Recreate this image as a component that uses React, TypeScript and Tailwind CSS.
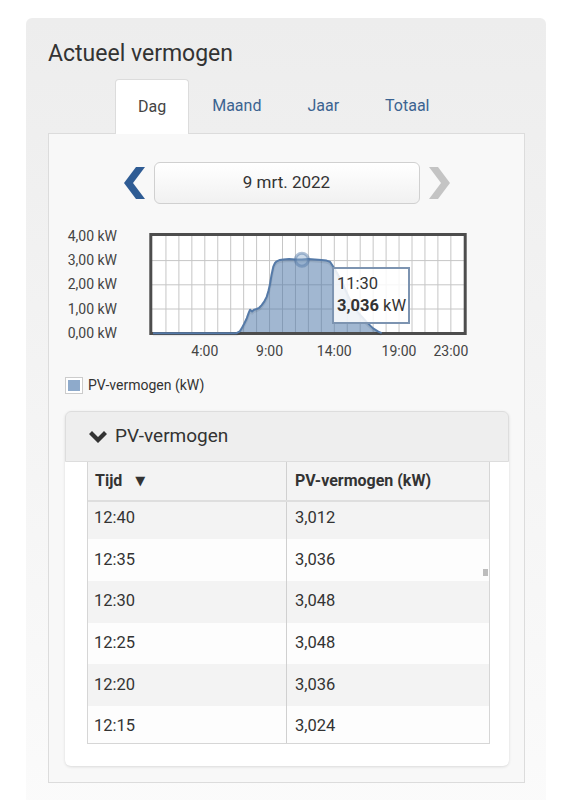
import React from 'react';

const H0 = 93;
const HW = 12.95;
const Y0 = 108.2;
const KW = 24.2;
const px = (h: number) => H0 + h * HW;
const py = (k: number) => Y0 - k * KW;

const series: [number, number][] = [
  [0, 0], [6.45, 0], [6.7, 0.08], [6.85, 0.2], [7.05, 0.4], [7.24, 0.62], [7.4, 0.85],
  [7.5, 0.97], [7.65, 0.9], [7.8, 0.97], [8.0, 1.0], [8.2, 1.05], [8.39, 1.16], [8.6, 1.32],
  [8.78, 1.5], [8.92, 1.75], [9.03, 2.0], [9.15, 2.4], [9.29, 2.75], [9.42, 2.9], [9.55, 2.97],
  [9.8, 3.03], [10.06, 3.05], [10.5, 3.07], [11, 3.05], [11.5, 3.04], [12, 3.06], [12.5, 3.05],
  [13, 3.03], [13.4, 3.0], [13.67, 2.95], [13.92, 2.75], [14.3, 2.4], [14.7, 1.98], [15.2, 1.4],
  [15.8, 0.88], [16.5, 0.46], [17.0, 0.2], [17.4, 0.06], [17.66, 0],
];

const linePath = series.map(([h, k], i) => `${i === 0 ? 'M' : 'L'}${px(h).toFixed(1)},${py(k).toFixed(1)}`).join(' ');
const areaPath = `${linePath} L${px(17.66).toFixed(1)},${Y0} L${px(0)},${Y0} Z`;

const rows = [
  ['12:40', '3,012'],
  ['12:35', '3,036'],
  ['12:30', '3,048'],
  ['12:25', '3,048'],
  ['12:20', '3,036'],
  ['12:15', '3,024'],
];

const Chart = () => (
  <div className="relative mt-[21px] ml-[11px] w-[420px] h-[140px]">
    <svg width="420" height="140" viewBox="0 0 420 140" className="block">
      <rect x="91" y="10" width="314" height="98" fill="#ffffff" />
      {Array.from({ length: 23 }, (_, i) => (
        <line key={i} x1={px(i + 1)} x2={px(i + 1)} y1="10" y2="108" stroke="#c6c6c6" strokeWidth="1" />
      ))}
      {[1, 2, 3].map((k) => (
        <line key={k} x1="91" x2="405" y1={py(k)} y2={py(k)} stroke="#c6c6c6" strokeWidth="1" />
      ))}
      <path d={areaPath} fill="#4a74a6" fillOpacity="0.52" />
      <rect x="90.8" y="9.5" width="314.4" height="99" fill="none" stroke="#4d4d4d" strokeWidth="3" />
      <path d={linePath} fill="none" stroke="#000" strokeOpacity="0.07" strokeWidth="3" transform="translate(0,1.5)" />
      <path d={linePath} fill="none" stroke="#557aa8" strokeWidth="2" strokeLinejoin="round" />
      <circle cx={px(11.5)} cy={py(3.036)} r="6.5" fill="#8caacd" fillOpacity="0.45" stroke="#4f76a5" strokeOpacity="0.45" strokeWidth="3" />
      <g fill="#444" fontSize="14" fontFamily="Roboto, sans-serif">
        {['4,00 kW', '3,00 kW', '2,00 kW', '1,00 kW', '0,00 kW'].map((t, i) => (
          <text key={t} x="57" y={py(4 - i) + 4.5} textAnchor="end">{t}</text>
        ))}
        {[[4, '4:00'], [9, '9:00'], [14, '14:00'], [19, '19:00'], [23, '23:00']].map(([h, t]) => (
          <text key={t as string} x={px(h as number)} y="130.5" textAnchor="middle">{t}</text>
        ))}
      </g>
    </svg>
    <div className="absolute left-[272px] top-[42px] w-[78px] h-[57px] border-2 border-[#7d94b1] bg-white/85 pl-[3px] pt-[4px] text-[16.5px] leading-[22px] text-[#333]">
      <div>11:30</div>
      <div><span className="font-bold">3,036</span> kW</div>
    </div>
  </div>
);

export default function App() {
  return (
    <div className="min-h-[800px] bg-white pt-[18px] pl-[26px] font-['Roboto','Liberation_Sans',sans-serif] overflow-hidden">
      <div className="w-[520px] h-[800px] rounded-t-[6px] bg-linear-to-b from-[#ededed] to-[#fbfbfb] pt-[22px] pl-[22px] pr-[21px]">
        <h1 className="text-[23px] leading-[28px] text-[#333]">Actueel vermogen</h1>

        <div className="mt-[11px] ml-[67px] flex text-[16px]">
          <div className="relative z-10 -mb-px h-[55px] px-[22px] flex items-center bg-white border border-b-0 border-[#dcdcdc] rounded-t-[4px] text-[#444]">Dag</div>
          <div className="h-[54px] px-[23px] flex items-center text-[#3b6391]">Maand</div>
          <div className="h-[54px] px-[23px] flex items-center text-[#3b6391]">Jaar</div>
          <div className="h-[54px] px-[23px] flex items-center text-[#3b6391]">Totaal</div>
        </div>

        <div className="h-[650px] border border-[#dcdcdc] bg-[#f8f8f8] pt-[28px]">
          <div className="flex items-center justify-center gap-[9px]">
            <svg width="21" height="32" viewBox="0 0 21 32">
              <polygon points="12,0 21,0 9,16 21,32 12,32 0,16" fill="#2f5c94" />
            </svg>
            <div className="w-[266px] h-[42px] rounded-[6px] border border-[#d0d0d0] bg-linear-to-b from-white to-[#f1f1f1] flex items-center justify-center text-[17px] text-[#333]">
              9 mrt. 2022
            </div>
            <svg width="21" height="32" viewBox="0 0 21 32">
              <polygon points="0,0 9,0 21,16 9,32 0,32 12,16" fill="#c4c4c4" />
            </svg>
          </div>

          <Chart />

          <div className="mt-[10px] ml-[16px] flex items-center gap-[5px]">
            <div className="w-[18px] h-[17px] border border-[#cccccc] bg-white p-[2px]">
              <div className="w-full h-full bg-[#8eaacb]" />
            </div>
            <span className="text-[14px] text-[#333]">PV-vermogen (kW)</span>
          </div>

          <div className="mt-[15px] ml-[16px] mr-[15px] bg-white rounded-[6px] shadow-[0_1px_3px_rgba(0,0,0,0.12)] pb-[22px]">
            <div className="h-[51px] bg-[#eeeeee] border border-[#dddddd] rounded-t-[6px] flex items-center pl-[23px] gap-[8px] text-[19px] text-[#333]">
              <svg width="18" height="12" viewBox="0 0 18 12">
                <polygon points="0,3 3,0 9,6 15,0 18,3 9,12" fill="#333" />
              </svg>
              <span>PV-vermogen</span>
            </div>

            <div className="ml-[22px] mr-[19px] border border-t-0 border-[#d6d6d6] text-[16px] text-[#333]">
              <div className="flex h-[40px] bg-[#f3f3f3] border-b-2 border-[#dedede] font-bold">
                <div className="w-[199px] border-r border-[#d0d0d0] pl-[7px] flex items-center gap-[13px]">
                  <span>Tijd</span>
                  <span className="text-[13px] font-['DejaVu_Sans',sans-serif]">▼</span>
                </div>
                <div className="flex-1 pl-[8px] flex items-center">PV-vermogen (kW)</div>
              </div>
              <div className="relative h-[241px] overflow-hidden">
                <div className="-mt-[4.5px]">
                  {rows.map(([t, v], i) => (
                    <div key={t} className={`flex h-[41.7px] text-[16.5px] ${i % 2 === 0 ? 'bg-[#f3f3f3]' : 'bg-[#fdfdfd]'}`}>
                      <div className="w-[199px] border-r border-[#d0d0d0] pl-[6px] flex items-center">{t}</div>
                      <div className="flex-1 pl-[8px] flex items-center">{v}</div>
                    </div>
                  ))}
                </div>
                <div className="absolute left-[395px] top-[67px] w-[5px] h-[7px] bg-[#bdbdbd]" />
              </div>
            </div>
          </div>
        </div>
      </div>
    </div>
  );
}
